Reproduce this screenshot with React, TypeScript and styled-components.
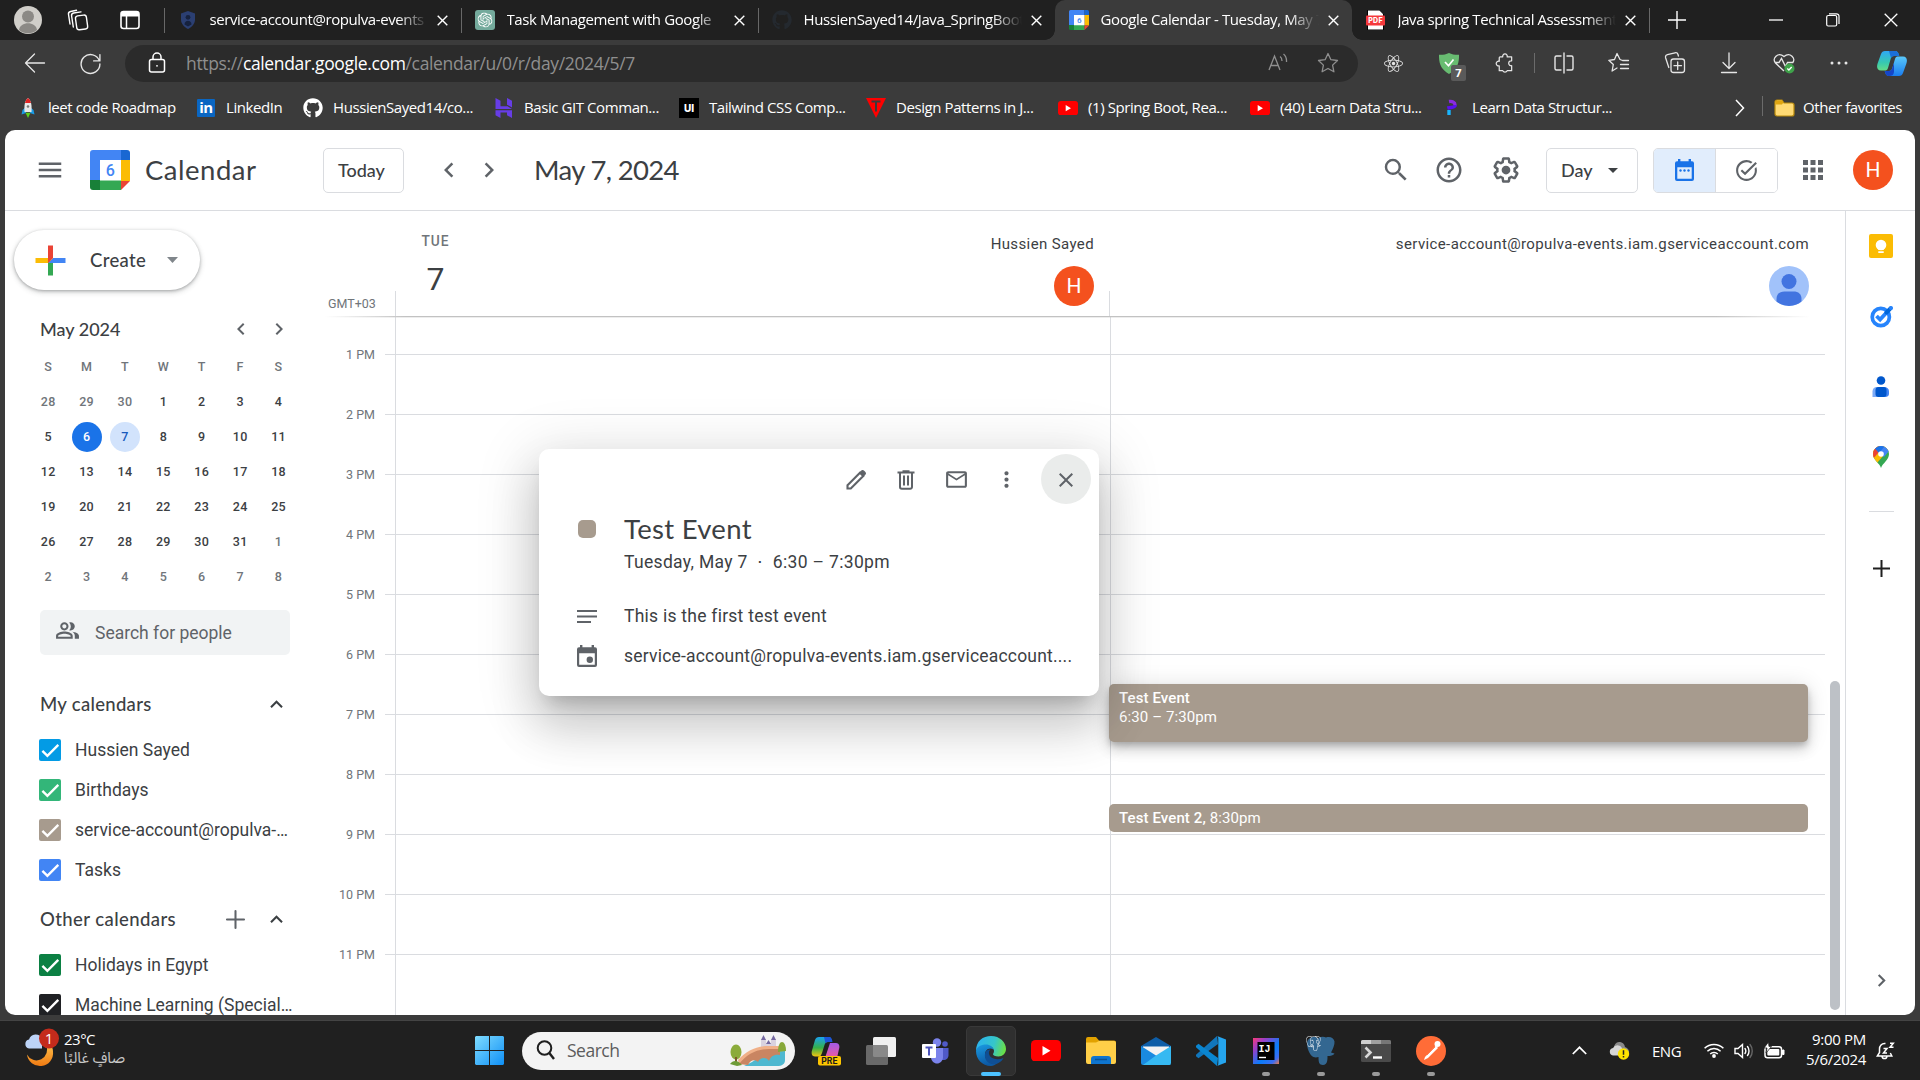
import React from 'react';
import styled, { createGlobalStyle, css } from 'styled-components';
import { MdMenu, MdSearch, MdHelpOutline, MdChevronLeft, MdChevronRight, MdApps, MdTaskAlt, MdOutlinePeopleAlt, MdExpandLess, MdClose, MdMoreVert, MdMailOutline } from 'react-icons/md';
import { FaReact, FaGithub } from 'react-icons/fa';
import { SiOpenai, SiPostgresql } from 'react-icons/si';

const SEGOE = '"Open Sans", "Noto Sans", "DejaVu Sans", sans-serif';
const ROBOTO = 'Roboto, "Liberation Sans", sans-serif';
const GOOGLE = 'Lato, Roboto, sans-serif';

const GlobalStyle = createGlobalStyle`
  *, *::before, *::after { box-sizing: border-box; }
  html, body { margin: 0; padding: 0; background: #202020; overflow: hidden; }
  svg { display: block; flex: none; }
`;

const Screen = styled.div`
  position: relative;
  width: 1920px;
  height: 1080px;
  display: flex;
  flex-direction: column;
  overflow: hidden;
  background: #3b3b3b;
  font-family: ${ROBOTO};
  white-space: nowrap;
`;

/* ---------- generic bits ---------- */
const Slot = styled.div<{ $w: number; $h?: number }>`
  width: ${p => p.$w}px;
  height: ${p => (p.$h ? p.$h + 'px' : '100%')};
  flex: none;
  display: flex;
  align-items: center;
  justify-content: center;
`;
const Label = styled.span<{ $w?: number; $ls?: number }>`
  display: block;
  flex: none;
  white-space: nowrap;
  text-align: left;
  ${p => p.$w !== undefined && css`width: ${p.$w}px;`}
  letter-spacing: ${p => p.$ls ?? 0}px;
`;

/* ---------- browser chrome ---------- */
const TitleBar = styled.div`
  height: 40px;
  flex: none;
  display: flex;
  background: #202020;
  color: #fff;
`;
const TitleLeft = styled.div`
  width: 164px;
  flex: none;
  display: flex;
  align-items: center;
  padding-left: 14px;
`;
const Tab = styled.div<{ $active?: boolean; $rule?: boolean }>`
  position: relative;
  width: 297px;
  flex: none;
  display: flex;
  align-items: center;
  padding-left: 13.5px;
  font: 400 15px ${SEGOE};
  color: #fff;
  ${p => p.$active && css`
    background: #3b3b3b;
    border-radius: 10px 10px 0 0;
    &::before, &::after {
      content: '';
      position: absolute;
      bottom: 0;
      width: 10px;
      height: 10px;
    }
    &::before { left: -10px; background: radial-gradient(circle at 0 0, #202020 9.5px, #3b3b3b 10px); }
    &::after { right: -10px; background: radial-gradient(circle at 100% 0, #202020 9.5px, #3b3b3b 10px); }
  `}
  ${p => p.$rule && css`
    background: linear-gradient(#686868, #686868) no-repeat 0 8px / 1px 25px;
  `}
`;
const TabText = styled.span`
  width: 218px;
  margin-left: 12px;
  padding-bottom: 2px;
  overflow: hidden;
  letter-spacing: -0.4px;
  mask-image: linear-gradient(90deg, #000 188px, transparent 218px);
`;
const TabClose = styled.span`
  margin-left: 9px;
  display: flex;
`;
const TabEnd = styled.div`
  flex: 1;
  display: flex;
  align-items: center;
  padding-left: 19px;
  background: linear-gradient(#686868, #686868) no-repeat 0 8px / 1px 25px;
`;

const ToolBar = styled.div`
  height: 46px;
  flex: none;
  display: flex;
  align-items: center;
  color: #e6e6e6;
`;
const Address = styled.div`
  width: 1233px;
  height: 37px;
  border-radius: 19px;
  background: #2b2b2b;
  display: flex;
  align-items: center;
  padding-left: 22px;
  font: 400 17.5px ${SEGOE};
  color: #8f8f8f;
  b { font-weight: 400; color: #fff; }
`;
const Grow = styled.div`flex: 1;`;
const Rule = styled.div<{ $h: number; $m?: string }>`
  width: 1px;
  height: ${p => p.$h}px;
  flex: none;
  background: #6b6b6b;
  margin: ${p => p.$m ?? 0};
`;
const ShieldWrap = styled.div`
  position: relative;
  width: 55px;
  display: flex;
  justify-content: center;
`;
const ShieldCount = styled.span`
  position: absolute;
  left: 30px;
  top: 12px;
  width: 15px;
  height: 16px;
  border-radius: 2px;
  background: #5a5a5a;
  color: #fff;
  font: 700 11px/16px ${SEGOE};
  text-align: center;
`;

const Bookmarks = styled.div`
  height: 44px;
  flex: none;
  display: flex;
  align-items: center;
  padding-left: 18px;
  color: #fff;
  font: 400 15px ${SEGOE};
`;
const Bookmark = styled.div<{ $w: number }>`
  width: ${p => p.$w}px;
  flex: none;
  display: flex;
  align-items: center;
  gap: 10px;
`;
const BookmarkText = styled(Label)`
  padding-bottom: 2px;
  letter-spacing: -0.42px;
`;
const UiTile = styled.span`
  width: 20px;
  height: 20px;
  background: #000;
  color: #fff;
  font: 800 10px/20px Inter, sans-serif;
  text-align: center;
`;
const InTile = styled.span`
  width: 18px;
  height: 18px;
  margin: 0 1px;
  border-radius: 1px;
  background: #0a66c2;
  color: #fff;
  font: 700 15px/17px ${SEGOE};
  letter-spacing: -0.5px;
  text-align: center;
`;

/* ---------- calendar page ---------- */
const Page = styled.div`
  position: relative;
  width: 1910px;
  height: 885px;
  margin-left: 5px;
  flex: none;
  border-radius: 10px;
  overflow: hidden;
  background: #fff;
  display: flex;
  flex-direction: column;
  color: #3c4043;
`;
const Header = styled.header`
  height: 81px;
  flex: none;
  display: flex;
  align-items: center;
  border-bottom: 1px solid #dadce0;
  color: #5f6368;
  font-family: ${GOOGLE};
`;
const Heading = styled.div<{ $w: number; $ls: number }>`
  width: ${p => p.$w}px;
  flex: none;
  font-size: 27.5px;
  line-height: 36px;
  letter-spacing: ${p => p.$ls}px;
  color: #3c4043;
`;
const OutlineButton = styled.button<{ $w: number }>`
  width: ${p => p.$w}px;
  height: 45px;
  flex: none;
  padding: 0 0 0 14px;
  border: 1px solid #dadce0;
  border-radius: 5px;
  background: #fff;
  display: flex;
  align-items: center;
  gap: 8px;
  color: #3c4043;
  font: 500 18px ${GOOGLE};
`;
const Toggle = styled.div`
  width: 125px;
  height: 45px;
  flex: none;
  display: flex;
  border: 1px solid #dadce0;
  border-radius: 5px;
  overflow: hidden;
`;
const ToggleHalf = styled.div<{ $on?: boolean }>`
  flex: 1;
  display: flex;
  align-items: center;
  justify-content: center;
  color: ${p => (p.$on ? '#1a73e8' : '#5f6368')};
  background: ${p => (p.$on ? '#e1edfc' : '#fff')};
  border-right: ${p => (p.$on ? '1px solid #dadce0' : '0')};
`;
const Avatar = styled.div<{ $s: number; $f: number }>`
  width: ${p => p.$s}px;
  height: ${p => p.$s}px;
  flex: none;
  border-radius: 50%;
  background: #f4511e;
  color: #fff;
  font: 400 ${p => p.$f}px/${p => p.$s + 1}px ${ROBOTO};
  letter-spacing: 0;
  text-align: center;
`;
const Body = styled.div`
  flex: 1;
  min-height: 0;
  display: flex;
`;

/* sidebar */
const Sidebar = styled.aside`
  width: 320px;
  flex: none;
  overflow: hidden;
  padding: 19px 0 0 35px;
`;
const Create = styled.button`
  width: 186px;
  height: 60px;
  margin-left: -26px;
  padding: 0 0 0 14px;
  border: 0;
  border-radius: 30px;
  background: #fff;
  box-shadow: 0 1px 3px rgba(60, 64, 67, .35), 0 2px 5px 1px rgba(60, 64, 67, .18);
  display: flex;
  align-items: center;
  color: #3c4043;
  font: 500 18.5px ${GOOGLE};
`;
const MonthHead = styled.div`
  margin-top: 19px;
  height: 40px;
  display: flex;
  align-items: center;
  font: 500 18px ${GOOGLE};
`;
const MonthGrid = styled.div`
  display: grid;
  grid-template-columns: repeat(7, 38.4px);
  grid-template-rows: 34px repeat(6, 35px);
  margin: 1px 0 0 -11px;
  width: 269px;
`;
const DayCell = styled.div<{ $kind: string }>`
  display: flex;
  align-items: center;
  justify-content: center;
  font: 500 12.5px ${ROBOTO};
  letter-spacing: 0.3px;
  color: ${p => (p.$kind === 'today' ? '#fff' : p.$kind === 'sel' ? '#185abc' : p.$kind === 'dim' ? '#70757a' : '#3c4043')};
  span {
    width: 30px;
    height: 30px;
    line-height: 30px;
    text-align: center;
    border-radius: 50%;
    background: ${p => (p.$kind === 'today' ? '#1a73e8' : p.$kind === 'sel' ? '#d2e3fc' : 'transparent')};
  }
`;
const PeopleSearch = styled.div`
  width: 250px;
  height: 45px;
  margin-top: 16px;
  border-radius: 5px;
  background: #f1f3f4;
  display: flex;
  align-items: center;
  padding-left: 15px;
  gap: 15px;
  color: #5f6368;
  font: 400 17.5px ${ROBOTO};
  svg { margin-bottom: 4px; }
`;
const ListHead = styled.div<{ $top: number }>`
  margin-top: ${p => p.$top}px;
  height: 40px;
  display: flex;
  align-items: center;
  font: 500 18.5px ${GOOGLE};
  color: #3c4043;
`;
const CalRow = styled.div`
  height: 40px;
  display: flex;
  align-items: center;
  gap: 14px;
  margin-left: -1px;
  font: 400 17.5px ${ROBOTO};
`;
const CheckBox = styled.span<{ $c: string }>`
  width: 22px;
  height: 22px;
  flex: none;
  border-radius: 2px;
  background: ${p => p.$c};
`;
const CalName = styled.span`
  width: 218px;
  overflow: hidden;
  text-overflow: ellipsis;
`;

/* main */
const Main = styled.main`
  position: relative;
  width: 1520px;
  flex: none;
  display: flex;
  flex-direction: column;
`;
const DayHead = styled.div`
  height: 105px;
  flex: none;
  display: flex;
`;
const GutterHead = styled.div`
  width: 70px;
  display: flex;
  align-items: flex-end;
  padding: 0 0 5px 3px;
  font: 400 12.5px ${ROBOTO};
  color: #70757a;
`;
const ColHead = styled.div<{ $w: number }>`
  width: ${p => p.$w}px;
  display: flex;
  justify-content: space-between;
  padding-right: 15px;
  background: linear-gradient(#dadce0, #dadce0) no-repeat 0 100% / 1px 25px;
`;
const Weekday = styled.div`
  width: 81px;
  padding-top: 21px;
  text-align: center;
  font: 500 13.75px/18px ${ROBOTO};
  letter-spacing: 1px;
  color: #70757a;
  strong {
    display: block;
    margin-top: 8px;
    font: 400 32px/42px ${ROBOTO};
    letter-spacing: 0;
    color: #3c4043;
  }
`;
const Owner = styled.div`
  margin-left: auto;
  padding-top: 23px;
  display: flex;
  flex-direction: column;
  align-items: flex-end;
  gap: 12px;
  font: 400 15px/20px ${ROBOTO};
  letter-spacing: 0.38px;
  color: #3c4043;
`;
const HeadShadow = styled.div`
  width: 1500px;
  height: 2px;
  flex: none;
  background: linear-gradient(90deg, #fff, #c2c2c2 80px, #c2c2c2 1390px, #fff 1485px);
  mask-image: linear-gradient(#000 50%, rgba(0, 0, 0, .3) 50%);
  margin-bottom: -1px;
`;
const Scroller = styled.div`
  flex: 1;
  min-height: 0;
  overflow: hidden;
  display: flex;
`;
const HourLabels = styled.div`
  width: 50px;
  flex: none;
  padding-top: 8px;
  margin-right: 10px;
  text-align: right;
  font: 400 12.5px/60px ${ROBOTO};
  color: #70757a;
`;
const Hours = styled.div`width: 1440px; flex: none;`;
const HourRow = styled.div<{ $h: number }>`
  height: ${p => p.$h}px;
  display: grid;
  grid-template-columns: 10px 715px 715px;
  border-bottom: 1px solid #dadce0;
  i { border-left: 1px solid #dadce0; }
`;
const ScrollTrack = styled.div`
  width: 20px;
  display: flex;
  justify-content: center;
  align-items: flex-end;
  padding-bottom: 5px;
`;
const ScrollThumb = styled.div`
  width: 10px;
  height: 329px;
  border-radius: 5px;
  background: #bdc1c6;
`;
const EventBlock = styled.div<{ $top: number; $h: number; $raised?: boolean }>`
  position: absolute;
  left: 784px;
  top: ${p => p.$top}px;
  width: 699px;
  height: ${p => p.$h}px;
  border-radius: 5px;
  padding: 5px 10px;
  background: #a79b8e;
  color: #fff;
  font: 400 15px/19px ${ROBOTO};
  letter-spacing: 0.1px;
  b { font-weight: 500; }
  ${p => p.$raised && css`box-shadow: 0 8px 13px rgba(0,0,0,.14), 0 1px 22px rgba(0,0,0,.12), 0 4px 6px -1px rgba(0,0,0,.2);`}
`;

/* right rail */
const Rail = styled.aside`
  flex: 1;
  border-left: 1px solid #dadce0;
  display: flex;
  flex-direction: column;
  align-items: center;
  padding-left: 1px;
`;
const RailLine = styled.div`
  width: 25px;
  height: 1px;
  background: #dadce0;
`;

/* event popup */
const Popup = styled.div`
  position: absolute;
  left: 534px;
  top: 319px;
  width: 560px;
  height: 247px;
  border-radius: 10px;
  background: #fff;
  color: #5f6368;
  box-shadow: 0 30px 47px 4px rgba(0,0,0,.14), 0 11px 57px 10px rgba(0,0,0,.12), 0 14px 19px -9px rgba(0,0,0,.2);
`;
const PopupBar = styled.div`
  height: 60px;
  padding: 1px 8px 0 0;
  display: flex;
  align-items: center;
  justify-content: flex-end;
`;
const CloseCircle = styled.div`
  width: 50px;
  height: 50px;
  margin: 0 0 2px 10px;
  padding-top: 2px;
  border-radius: 50%;
  background: #eaeceb;
  display: flex;
  align-items: center;
  justify-content: center;
`;
const PopupRow = styled.div<{ $h: number }>`
  height: ${p => p.$h}px;
  display: flex;
  align-items: center;
  font: 400 17.5px ${ROBOTO};
  color: #3c4043;
`;
const PopupIcon = styled.div`
  width: 95px;
  margin-right: -10px;
  flex: none;
  display: flex;
  justify-content: center;
  color: #5f6368;
`;
const Swatch = styled.span`
  width: 18px;
  height: 18px;
  border-radius: 5px;
  background: #a79b8e;
`;
const PopupTitle = styled.span`
  padding-bottom: 2px;
  font: 400 27.5px ${GOOGLE};
  letter-spacing: 0.3px;
`;

/* taskbar */
const TaskBar = styled.div`
  height: 60px;
  margin-top: 5px;
  flex: none;
  display: flex;
  align-items: center;
  background: #202020;
  border-top: 1px solid #444;
  color: #fff;
  font: 400 15px ${SEGOE};
`;
const Weather = styled.div`
  width: 462px;
  flex: none;
  display: flex;
  align-items: center;
  padding-left: 22px;
  gap: 4px;
`;
const WeatherText = styled.div`
  display: flex;
  flex-direction: column;
  padding-bottom: 3px;
  line-height: 20px;
`;
const Muted = styled.div`
  color: #c8c8c8;
  font: 400 14.8px/20px "Noto Sans Arabic", "DejaVu Sans", sans-serif;
`;
const SearchPill = styled.div`
  width: 273px;
  height: 38px;
  margin: 0 3px 0 5px;
  flex: none;
  border-radius: 19px;
  background: #f3f3f3;
  display: flex;
  align-items: center;
  justify-content: space-between;
  padding: 0 7px 0 14px;
  color: #5c5c5c;
  font-size: 17.5px;
`;
const SearchLeft = styled.div`
  display: flex;
  align-items: center;
  gap: 12px;
  padding-bottom: 1px;
`;
const TaskButton = styled.div<{ $active?: boolean; $running?: boolean }>`
  width: 50px;
  height: 50px;
  margin: 0 2.5px;
  flex: none;
  position: relative;
  display: flex;
  align-items: center;
  justify-content: center;
  border-radius: 5px;
  ${p => p.$active && css`background: #2f2f2f; border: 1px solid #393939;`}
  ${p => (p.$active || p.$running) && css`
    &::after {
      content: '';
      position: absolute;
      bottom: ${p.$active ? -1 : 0}px;
      left: 50%;
      transform: translateX(-50%);
      width: ${p.$active ? 20 : 8}px;
      height: 4px;
      border-radius: 2px;
      background: ${p.$active ? '#4cc2ff' : '#9a9a9a'};
    }
  `}
`;
const Tray = styled.div`
  flex: 1;
  display: flex;
  align-items: center;
  justify-content: flex-end;
  padding-right: 20px;
`;
const Clock = styled.div`
  width: 70px;
  padding-bottom: 3px;
  text-align: right;
  line-height: 20px;
  letter-spacing: -0.3px;
`;

/* ---------- drawings ---------- */
const X = ({ s = 11, w = 1.4, c = '#fff' }: { s?: number; w?: number; c?: string }) => (
  <svg width={s} height={s} viewBox={`0 0 ${s} ${s}`} stroke={c} strokeWidth={w} fill="none"><path d={`M.7.7 ${s - 0.7} ${s - 0.7}M${s - 0.7} .7 .7 ${s - 0.7}`} /></svg>
);
const CalLogo = ({ s }: { s: number }) => (
  <svg width={s} height={s} viewBox="0 0 40 40">
    <path d="M3 0h28v10H10v20H0V3a3 3 0 0 1 3-3z" fill="#4285f4" />
    <path d="M31 0h6a3 3 0 0 1 3 3v7h-9z" fill="#1967d2" />
    <path d="M31 10h9v21h-9z" fill="#fbbc04" />
    <path d="M0 30h10v10H3a3 3 0 0 1-3-3z" fill="#188038" />
    <path d="M10 30h21v10H10z" fill="#34a853" />
    <path d="M31 31h9l-9 9z" fill="#ea4335" />
    <path d="M10 10h21v20.500H10z" fill="#fff" />
    <text x="20.4" y="26" textAnchor="middle" fontFamily={ROBOTO} fontSize="16" fontWeight="500" fill="#4285f4">6</text>
  </svg>
);
const Stroke = ({ s = 22, d, w = 1.3, c = 'currentColor', children }: { s?: number; d?: string; w?: number; c?: string; children?: React.ReactNode }) => (
  <svg width={s} height={s} viewBox="0 0 22 22" fill="none" stroke={c} strokeWidth={w} strokeLinecap="round" strokeLinejoin="round">{d && <path d={d} />}{children}</svg>
);
const YouTube = ({ w = 20 }: { w?: number }) => (
  <svg width={w} height={w * 0.72} viewBox="0 0 30 21.5"><rect width="30" height="21.5" rx="4.5" fill="#f00" /><path d="M11.5 6l8 4.75-8 4.75z" fill="#fff" /></svg>
);
const Folder = () => (
  <svg width="21" height="18" viewBox="0 0 21 18"><path d="M1 3a2 2 0 0 1 2-2h5l2 3h8a2 2 0 0 1 2 2v9a2 2 0 0 1-2 2H3a2 2 0 0 1-2-2z" fill="#ffda74" stroke="#b98a0b" strokeWidth="1.2" /><path d="M1.4 3a1.6 1.6 0 0 1 1.6-1.6h4.8l1.6 2.2L8 5.5H1.4z" fill="#e0a510" /></svg>
);
const Gear = () => (
  <svg width="30" height="30" viewBox="0 0 24 24" fill="#5f6368"><path d="M13.85 22.25h-3.7c-.74 0-1.36-.54-1.45-1.27l-.27-1.89c-.27-.14-.53-.29-.79-.46l-1.8.72c-.7.26-1.47-.03-1.81-.65L2.2 15.53c-.35-.66-.2-1.44.36-1.88l1.53-1.19c-.01-.15-.02-.3-.02-.46 0-.15.01-.31.02-.46l-1.52-1.19c-.59-.45-.74-1.26-.37-1.88l1.85-3.19c.34-.62 1.11-.9 1.79-.63l1.81.73c.26-.17.52-.32.78-.46l.27-1.91c.09-.7.71-1.25 1.44-1.25h3.7c.74 0 1.36.54 1.45 1.27l.27 1.89c.27.14.53.29.79.46l1.8-.72c.71-.26 1.48.03 1.82.65l1.84 3.18c.36.66.2 1.44-.36 1.88l-1.52 1.19c.01.15.02.3.02.46s-.01.31-.02.46l1.52 1.19c.56.45.72 1.23.37 1.86l-1.86 3.22c-.34.62-1.11.9-1.8.63l-1.8-.72c-.26.17-.52.32-.78.46l-.27 1.91c-.1.68-.72 1.22-1.46 1.22zm-3.23-2h2.76l.37-2.55.53-.22c.44-.18.88-.44 1.34-.78l.45-.34 2.38.96 1.38-2.4-2.03-1.58.07-.56c.03-.26.06-.51.06-.78s-.03-.53-.06-.78l-.07-.56 2.03-1.58-1.39-2.4-2.39.96-.45-.35c-.42-.32-.87-.58-1.33-.77l-.52-.22-.37-2.55h-2.76l-.37 2.55-.53.21c-.44.19-.88.44-1.34.79l-.45.33-2.38-.95-1.39 2.39 2.03 1.58-.07.56a7 7 0 0 0-.06.79c0 .26.02.53.06.78l.07.56-2.03 1.58 1.38 2.4 2.39-.96.45.35c.43.33.86.58 1.33.77l.53.22.38 2.55z" /><circle cx="12" cy="12" r="3.5" /></svg>
);
const Tick = () => (
  <svg width="22" height="22" viewBox="0 0 22 22" fill="none" stroke="#fff" strokeWidth="2.4"><path d="M3.4 11.8l5 5L19.3 5.9" /></svg>
);
const Copilot = () => (
  <svg width="30" height="27" viewBox="0 0 30 27">
    <defs>
      <linearGradient id="cpA" x1="0" y1="0" x2="0" y2="1"><stop offset="0" stopColor="#2fa8f5" /><stop offset=".6" stopColor="#37c9b0" /><stop offset="1" stopColor="#64dd87" /></linearGradient>
      <linearGradient id="cpB" x1="0" y1="0" x2="0" y2="1"><stop offset="0" stopColor="#5ac8fa" /><stop offset="1" stopColor="#1a7df0" /></linearGradient>
    </defs>
    <path d="M8 1h10c3 0 3.500 2.500 4.300 5H17c-2 0-3 1.500-3.500 3.500L11 18c-.6 2-1.500 2.500-3.500 2.500H4C0 20.500-.5 17 .6 13.500L4 4c.7-2 2-3 4-3z" fill="url(#cpA)" />
    <path d="M22 26H12c-3 0-3.500-2.500-4.300-5H12c2 0 3-1.500 3.500-3.500L18 9c.6-2 1.500-2.500 3.500-2.500H26c4 0 4.500 3.500 3.400 7L26 23c-.7 2-2 3-4 3z" fill="url(#cpB)" />
    <path d="M7.700 21H12c2 0 3-1.500 3.500-3.500L17 13v9c-.5 3-2 4-5 4-3 0-3.500-2.500-4.300-5z" fill="#1546c8" />
    <path d="M12 1h6c3 0 3.500 2.500 4.300 5H17c-1.500 0-2.500.8-3 2z" fill="#1b6fd8" />
  </svg>
);

const tabs = [
  { t: 'service-account@ropulva-events', icon: <svg width="20" height="20" viewBox="0 0 20 20"><path d="M10 1l7 2.600v6c0 4-3 7.600-7 9.400-4-1.800-7-5.400-7-9.400v-6z" fill="#2b3f72" /><circle cx="10" cy="7.300" r="2.400" fill="#16223f" /><path d="M6.500 14.500c0-5 7-5 7 0L10 16.500z" fill="#16223f" /></svg> },
  { t: 'Task Management with Google', icon: <svg width="20" height="20" viewBox="0 0 20 20"><rect width="20" height="20" rx="3" fill="#74aa9c" /><SiOpenai x="2.500" y="2.500" width="15" height="15" color="#fff" /></svg>, rule: true },
  { t: 'HussienSayed14/Java_SpringBoot', icon: <FaGithub size={20} color="#24292f" />, rule: true },
  { t: 'Google Calendar - Tuesday, May 7,', icon: <CalLogo s={20} />, active: true },
  { t: 'Java spring Technical Assessment', icon: <svg width="20" height="20" viewBox="0 0 20 20"><path d="M1.500 0h12l4 4v16h-16z" fill="#fff" stroke="#000" /><rect x="0" y="5.500" width="19" height="10" rx="1" fill="#f6393c" /><text x="9.500" y="13.200" textAnchor="middle" fontFamily="Inter, sans-serif" fontWeight="800" fontSize="7" fill="#fff" letterSpacing=".3">PDF</text></svg> },
];

const bookmarks: { t: string; w: number; icon: React.ReactNode }[] = [
  { t: 'leet code Roadmap', w: 178, icon: <svg width="20" height="22" viewBox="0 0 20 22"><path d="M4.500 13l3.500-3v6l-4.500 1.500zM15.500 13L12 10v6l4.500 1.500z" fill="#1a9be6" /><path d="M10 1c3 2.500 4 6 3.500 14h-7C6 7 7 3.500 10 1z" fill="#e8e8e8" /><path d="M10 1c1.500 1.200 2.500 2.800 3 5H7c.5-2.200 1.500-3.800 3-5z" fill="#e02424" /><circle cx="10" cy="9.500" r="1.300" fill="#777" /><path d="M7.500 15.800h5L10 21z" fill="#5bd11d" /></svg> },
  { t: 'LinkedIn', w: 107, icon: <InTile>in</InTile> },
  { t: 'HussienSayed14/co...', w: 191, icon: <FaGithub size={20} /> },
  { t: 'Basic GIT Comman...', w: 185, icon: <svg width="20" height="20" viewBox="0 0 20 20" fill="#673de6"><path d="M1.500 0l5 2.700v5.600h7L18 11H1.500zM13 0l5 2.700v6.700l-5-2.700zM1.500 12.200h16.500V20l-5-2.700v-2.900h-6.500V20l-5-2.700z" /></svg> },
  { t: 'Tailwind CSS Comp...', w: 187, icon: <UiTile>UI</UiTile> },
  { t: 'Design Patterns in J...', w: 192, icon: <svg width="20" height="20" viewBox="0 0 20 20"><path d="M0 0h20L10 20z" fill="#f00" /><path d="M5.500 3.500h9M10 3.500v10" stroke="#3b3b3b" strokeWidth="2" fill="none" /></svg> },
  { t: '(1) Spring Boot, Rea...', w: 192, icon: <YouTube /> },
  { t: '(40) Learn Data Stru...', w: 192, icon: <YouTube /> },
  { t: 'Learn Data Structur...', w: 200, icon: <svg width="20" height="20" viewBox="0 0 20 20" fill="none" strokeWidth="3.400"><path d="M7 3.500c3-.5 6 .5 6 3.500" stroke="#8a2be2" /><path d="M13.300 7c0 3-6 2.500-8 3" stroke="#5b10f0" /><path d="M7 12v5" stroke="#19b5fe" /></svg> },
];

const hours = ['1 PM', '2 PM', '3 PM', '4 PM', '5 PM', '6 PM', '7 PM', '8 PM', '9 PM', '10 PM', '11 PM'];
const days = [28, 29, 30, ...Array.from({ length: 31 }, (_, i) => i + 1), 1, 2, 3, 4, 5, 6, 7, 8];
const kindOf = (i: number) => (i < 3 || i > 33 ? 'dim' : i === 8 ? 'today' : i === 9 ? 'sel' : 'day');

const mine: [string, string][] = [['Hussien Sayed', '#039be5'], ['Birthdays', '#33b679'], ['service-account@ropulva-events', '#a79b8e'], ['Tasks', '#4285f4']];
const others: [string, string][] = [['Holidays in Egypt', '#0b8043'], ['Machine Learning (Specialization)', '#202124']];

const CalendarRow = ({ name, color }: { name: string; color: string }) => (
  <CalRow><CheckBox $c={color}><Tick /></CheckBox><CalName>{name}</CalName></CalRow>
);

function Chrome() {
  return (
    <>
      <TitleBar>
        <TitleLeft>
          <svg width="28" height="28" viewBox="0 0 28 28"><circle cx="14" cy="14" r="14" fill="#d0cec9" /><circle cx="14" cy="10.500" r="6" fill="#8b8985" /><path d="M5 24c1-9 17-9 18 0a14 14 0 0 1-18 0z" fill="#8b8985" /></svg>
          <Slot $w={71}>
            <Stroke w={1.4}><rect x="9" y="6.500" width="11" height="14" rx="2.500" transform="rotate(-8 14 13)" /><path d="M6.300 18L4.600 7a2.600 2.600 0 0 1 2.100-3L14 2.900M3 15L1.500 5.500A2.600 2.600 0 0 1 3.600 2.500L9.500 1.300" /></Stroke>
          </Slot>
          <Slot $w={34}>
            <svg width="20" height="20" viewBox="0 0 20 20"><rect x="1" y="1.500" width="18" height="17" rx="2.500" fill="none" stroke="#fff" strokeWidth="1.600" /><path d="M1 6.500V4a2.500 2.500 0 0 1 2.500-2.500h13A2.500 2.500 0 0 1 19 4v2.500z" fill="#fff" /><path d="M6.500 6v12" stroke="#fff" strokeWidth="1.500" /></svg>
          </Slot>
        </TitleLeft>
        {tabs.map((tab, i) => (
          <Tab key={tab.t} $active={tab.active} $rule={i === 0 || tab.rule}>
            {tab.icon}<TabText>{tab.t}</TabText><TabClose><X /></TabClose>
          </Tab>
        ))}
        <TabEnd>
          <svg width="18" height="18" viewBox="0 0 18 18" stroke="#fff" strokeWidth="1.400"><path d="M9 0v18M0 9h18" /></svg>
          <Slot $w={70} />
          <Slot $w={40}><svg width="14" height="2"><path d="M0 1h14" stroke="#fff" strokeWidth="1.300" /></svg></Slot>
          <Slot $w={74}><svg width="14" height="14" viewBox="0 0 14 14" fill="none" stroke="#fff" strokeWidth="1.200"><rect x=".7" y="2.500" width="10" height="10.500" rx="1.500" /><path d="M3 .8h7.500a2.500 2.500 0 0 1 2.500 2.500V11" /></svg></Slot>
          <Slot $w={42}><X s={14} w={1.3} /></Slot>
        </TabEnd>
      </TitleBar>
      <ToolBar>
        <Slot $w={70}><Stroke d="M20.500 11H1.500M10.500 2L1.500 11l9 9" /></Slot>
        <Slot $w={40}><Stroke s={23} d="M19.500 8.500A9 9 0 1 0 20 11.500M20 2.500v6h-6" /></Slot>
        <Slot $w={15} />
        <Address>
          <svg width="20" height="22" viewBox="0 0 20 22" fill="none" stroke="#fff" strokeWidth="1.500"><rect x="2.500" y="7.500" width="15" height="12.500" rx="2" /><path d="M6 7.500V5a4 4 0 0 1 8 0v2.500" /><circle cx="10" cy="13.800" r=".9" fill="#fff" stroke="none" /></svg>
          <Slot $w={19} />
          <Label $ls={-0.35}>https://<b>calendar.google.com</b>/calendar/u/0/r/day/2024/5/7</Label>
          <Grow />
          <svg width="22" height="20" viewBox="0 0 22 20" fill="none" stroke="#8f8f8f" strokeWidth="1.300"><path d="M1 17L6.500 3 12 17M3 12.500h7M12 3.500c1.500 1 2 2.500 2 4.500M15.500 1c2.500 2 3.200 4.500 3 8" /></svg>
          <Slot $w={27} />
          <Stroke c="#8f8f8f" d="M11 1.500l2.900 6.200 6.600.8-4.900 4.600 1.300 6.700L11 16.500l-5.900 3.300 1.300-6.700L1.500 8.500l6.600-.8z" />
          <Slot $w={19} />
        </Address>
        <Slot $w={8} />
        <Slot $w={55}><FaReact size={19} /></Slot>
        <ShieldWrap>
          <svg width="20" height="21" viewBox="0 0 20 21"><path d="M10 0c3 1.500 6.500 2 10 1.800C20.300 11 17.500 17 10 21 2.500 17-.3 11 0 1.800 3.500 2 7 1.500 10 0z" fill="#68bc71" /><path d="M6 9l3.500 3.800L14.500 6.500" fill="none" stroke="#fff" strokeWidth="1.700" /></svg>
          <ShieldCount>7</ShieldCount>
        </ShieldWrap>
        <Slot $w={56}><Stroke s={21} d="M6.500 4h2.700a2.400 2.400 0 1 1 4.600 0H18.500v4.200a2.600 2.600 0 1 0 0 5.100V18.500h-4.700a2.500 2.500 0 0 1-4.600 0H5.500v-5a2.500 2.500 0 1 1 0-4.800V5a1 1 0 0 1 1-1z" /></Slot>
        <Rule $h={20} $m="0 1px 0 2px" />
        <Slot $w={55}><Stroke w={1.4} d="M11 1v20M8 4H3.500A1.500 1.500 0 0 0 2 5.500v11A1.500 1.500 0 0 0 3.500 18H8M14 4h4.500A1.500 1.500 0 0 1 20 5.500v11a1.500 1.500 0 0 1-1.500 1.500H14" /></Slot>
        <Slot $w={56}><Stroke d="M20.500 8.500h-6L12 7.500 9 1.500 6.500 7.500.8 8.300l4.500 4.200-1.200 6.500L9 16M12.500 12.500h8M12.500 16.500h8" /></Slot>
        <Slot $w={55}><Stroke><rect x="7" y="7" width="13.500" height="13.500" rx="2.500" /><path d="M13.700 10v7.500M10 13.700h7.500M4.800 15.500L1.600 5.700a2.500 2.500 0 0 1 1.800-3l7.600-1.900a2.500 2.500 0 0 1 3 1.700l.4 1.500" /></Stroke></Slot>
        <Slot $w={54}><Stroke d="M11 1v15M5 10.500l6 6 6-6M3.500 20.500h15" /></Slot>
        <Slot $w={55}>
          <svg width="24" height="24" viewBox="0 0 24 24" fill="none" stroke="#e6e6e6" strokeWidth="1.400"><path d="M12 20L3.500 12C-.5 7.500 6 .5 12 5.500 18 .5 24.500 7.500 20.500 12M3 11.500h4l2.500-4 4 8 2-4H21" /><circle cx="17.500" cy="17.500" r="5" fill="#3fa24a" stroke="none" /><path d="M15.300 17.600l1.600 1.500 2.800-3" stroke="#fff" /></svg>
        </Slot>
        <Slot $w={55}><svg width="18" height="4" fill="#e6e6e6"><circle cx="2" cy="2" r="1.500" /><circle cx="9" cy="2" r="1.500" /><circle cx="16" cy="2" r="1.500" /></svg></Slot>
        <Slot $w={51}><Copilot /></Slot>
      </ToolBar>
      <Bookmarks>
        {bookmarks.map(b => <Bookmark key={b.t} $w={b.w}>{b.icon}<BookmarkText $ls={-0.42}>{b.t}</BookmarkText></Bookmark>)}
        <Grow />
        <svg width="10" height="18" viewBox="0 0 10 18" fill="none" stroke="#fff" strokeWidth="1.500"><path d="M1 1l7.500 8L1 17" /></svg>
        <Rule $h={20} $m="-4px 11px 0 17px" />
        <Folder />
        <Slot $w={8} />
        <BookmarkText $w={117}>Other favorites</BookmarkText>
      </Bookmarks>
    </>
  );
}

const HeaderBar = () => (
  <Header>
    <Slot $w={30} /><Slot $w={30}><MdMenu size={30} /></Slot><Slot $w={25} />
    <CalLogo s={40} />
    <Slot $w={15} />
    <Heading $w={178} $ls={0.5}>Calendar</Heading>
    <OutlineButton $w={81}>Today</OutlineButton>
    <Slot $w={25} /><Slot $w={40}><MdChevronLeft size={30} /></Slot><Slot $w={40}><MdChevronRight size={30} /></Slot>
    <Slot $w={25} />
    <Heading $w={201} $ls={-0.65}>May 7, 2024</Heading>
    <Grow />
    <Slot $w={52}><MdSearch size={30} /></Slot>
    <Slot $w={53}><MdHelpOutline size={30} /></Slot>
    <Slot $w={62}><Gear /></Slot>
    <Slot $w={9} />
    <OutlineButton $w={92}><Label $w={39}>Day</Label><svg width="10" height="5"><path d="M0 0h10L5 5z" fill="#3c4043" /></svg></OutlineButton>
    <Slot $w={15} />
    <Toggle>
      <ToggleHalf $on><svg width="19" height="22" viewBox="0 0 19 22" fill="#1a73e8"><path fillRule="evenodd" d="M3 0h2.400v2.300h8.200V0H16v2.300h1a2 2 0 0 1 2 2V20a2 2 0 0 1-2 2H2a2 2 0 0 1-2-2V4.300a2 2 0 0 1 2-2h1zM2.300 8.200v11.500h14.400V8.200z" /><circle cx="5.500" cy="11.500" r="1.200" /><circle cx="9.500" cy="11.500" r="1.200" /><circle cx="13.500" cy="11.500" r="1.200" /></svg></ToggleHalf>
      <ToggleHalf><MdTaskAlt size={25} /></ToggleHalf>
    </Toggle>
    <Slot $w={69}><MdApps size={30} /></Slot>
    <Slot $w={6} />
    <Avatar $s={40} $f={21}>H</Avatar>
    <Slot $w={22} />
  </Header>
);

const SideBar = () => (
  <Sidebar>
    <Create>
      <svg width="45" height="45" viewBox="0 0 36 36"><path fill="#34A853" d="M16 16v14h4V20z" /><path fill="#4285F4" d="M30 16H20l-4 4h14z" /><path fill="#FBBC05" d="M6 16v4h10l4-4z" /><path fill="#EA4335" d="M20 16V6h-4v14z" /></svg>
      <Slot $w={17} /><Label $w={77} $ls={0.35}>Create</Label>
      <svg width="11" height="6"><path d="M0 0h11L5.500 6z" fill="#80868b" /></svg>
    </Create>
    <MonthHead><Label $w={182}>May 2024</Label><Slot $w={38}><MdChevronLeft size={24} color="#5f6368" /></Slot><Slot $w={38}><MdChevronRight size={24} color="#5f6368" /></Slot></MonthHead>
    <MonthGrid>
      {['S', 'M', 'T', 'W', 'T', 'F', 'S'].map((d, i) => <DayCell key={'h' + i} $kind="dim"><span>{d}</span></DayCell>)}
      {days.map((d, i) => <DayCell key={i} $kind={kindOf(i)}><span>{d}</span></DayCell>)}
    </MonthGrid>
    <PeopleSearch><MdOutlinePeopleAlt size={25} />Search for people</PeopleSearch>
    <ListHead $top={29}><Label $w={224} $ls={0.3}>My calendars</Label><MdExpandLess size={25} /></ListHead>
    <Slot $w={1} $h={6} />
    {mine.map(([n, c]) => <CalendarRow key={n} name={n} color={c} />)}
    <ListHead $top={9}><Label $w={183} $ls={0.42}>Other calendars</Label><Stroke s={25} c="#5f6368" w={1.8} d="M11 3.500v15M3.500 11h15" /><Slot $w={16} /><MdExpandLess size={25} /></ListHead>
    <Slot $w={1} $h={6} />
    {others.map(([n, c]) => <CalendarRow key={n} name={n} color={c} />)}
  </Sidebar>
);

const DayView = () => (
  <Main>
    <DayHead>
      <GutterHead>GMT+03</GutterHead>
      <ColHead $w={714}>
        <Weekday>TUE<strong>7</strong></Weekday>
        <Owner>Hussien Sayed<Avatar $s={40} $f={21}>H</Avatar></Owner>
      </ColHead>
      <ColHead $w={715}>
        <Owner>service-account@ropulva-events.iam.gserviceaccount.com
          <svg width="40" height="40" viewBox="0 0 40 40"><circle cx="20" cy="20" r="20" fill="#a1c2fa" /><circle cx="20" cy="15.500" r="7.500" fill="#4274e0" /><path d="M7.500 35.500V33c0-5 3-7.500 8-7.500h9c5 0 8 2.500 8 7.500v2.500a20 20 0 0 1-25 0z" fill="#4274e0" /></svg>
        </Owner>
      </ColHead>
    </DayHead>
    <HeadShadow />
    <Scroller>
      <HourLabels>{hours.map(h => <div key={h}>{h}</div>)}</HourLabels>
      <Hours>{[38, ...Array(10).fill(60), 62].map((h, i) => <HourRow key={i} $h={h}><span /><i /><i /></HourRow>)}</Hours>
      <ScrollTrack><ScrollThumb /></ScrollTrack>
    </Scroller>
    <EventBlock $top={473} $h={58} $raised><b>Test Event</b><br />6:30 – 7:30pm</EventBlock>
    <EventBlock $top={593} $h={28}><b>Test Event 2,</b> 8:30pm</EventBlock>
  </Main>
);

const SideRail = () => (
  <Rail>
    <Slot $w={40} $h={70}><svg width="24" height="24" viewBox="0 0 24 24"><rect width="24" height="24" rx="2" fill="#fbbc04" /><circle cx="12" cy="11" r="5.300" fill="#fff" /><path d="M9.300 14h5.400v2H9.300zM9.300 17.200h5.400V19H9.300z" fill="#fff" /></svg></Slot>
    <Slot $w={40} $h={70}><svg width="23" height="23" viewBox="0 0 23 23"><circle cx="10.800" cy="12" r="8.600" fill="none" stroke="#2684fc" strokeWidth="3.700" /><path d="M6.500 11l3.600 3.600L18 6" fill="none" stroke="#2684fc" strokeWidth="3.800" /><path d="M16.500 7.500l4-4.200" stroke="#0066da" strokeWidth="4" strokeLinecap="round" /><circle cx="21" cy="3" r="2" fill="#2684fc" /></svg></Slot>
    <Slot $w={40} $h={71}><svg width="18" height="22" viewBox="0 0 18 22"><circle cx="9" cy="4.500" r="4.300" fill="#0057cc" /><path d="M5 11c-3 0-4.500 2-4.500 4.500V21H9V11z" fill="#7baaf7" /><path d="M12 11c3 0 5 1.500 5 4.500v2c0 2-1 3.500-4 3.500H9V11z" fill="#4285f4" /><rect x="3.500" y="11" width="11" height="10" rx="3" fill="#0057cc" /></svg></Slot>
    <Slot $w={40} $h={70}><svg width="16" height="22" viewBox="0 0 16 22">
      <defs><clipPath id="pin"><path d="M8 0a8 8 0 0 1 8 8c0 3-1.500 5-3.500 7.500C10.500 18 9 19 8 22c-1-3-2.500-4-4.500-6.500C1.500 13 0 11 0 8a8 8 0 0 1 8-8z" /></clipPath></defs>
      <g clipPath="url(#pin)"><rect width="16" height="22" fill="#34a853" /><path d="M0 0h16v3L4 17-2 13z" fill="#fbbc04" /><path d="M0 0h11L0 13z" fill="#ea4335" /><path d="M2 2l6-3 9 3-1 3-5 6-5-4z" fill="#4285f4" /><path d="M2 2.500L8-1l3 2-5 6z" fill="#1a73e8" /></g><circle cx="8" cy="8" r="2.800" fill="#fff" /></svg></Slot>
    <Slot $w={40} $h={38}><RailLine /></Slot>
    <Slot $w={40} $h={76}><svg width="17" height="17" stroke="#1f1f1f" strokeWidth="2"><path d="M8.500 0v17M0 8.500h17" /></svg></Slot>
    <Grow />
    <Slot $w={40} $h={70}><MdChevronRight size={25} color="#5f6368" /></Slot>
  </Rail>
);

const EventPopup = () => (
  <Popup>
    <PopupBar>
      <Slot $w={50}><svg width="21" height="21" viewBox="0 0 21 21" fill="none" stroke="#5f6368" strokeWidth="2.100"><path d="M1.500 16.200L14 3.700l3.300 3.300L4.800 19.500H1.500z" /><path d="M14 3.700l1.700-1.700a1.300 1.300 0 0 1 1.800 0L19 3.500a1.300 1.300 0 0 1 0 1.800L17.300 7z" fill="#5f6368" strokeWidth="1.200" /></svg></Slot>
      <Slot $w={50}><svg width="18" height="20" viewBox="0 0 18 20" fill="none" stroke="#5f6368" strokeWidth="2"><path d="M.5 2.500h17M5.500 1.200h7M3 2.500V17a1.800 1.800 0 0 0 1.800 1.800h8.400A1.800 1.800 0 0 0 15 17V2.500M7 5.500V15.500M11 5.500V15.500" /></svg></Slot>
      <Slot $w={50}><MdMailOutline size={25} /></Slot>
      <Slot $w={50}><MdMoreVert size={25} /></Slot>
      <CloseCircle><MdClose size={24} /></CloseCircle>
    </PopupBar>
    <PopupRow $h={40}><PopupIcon><Swatch /></PopupIcon><PopupTitle>Test Event</PopupTitle></PopupRow>
    <PopupRow $h={26}><PopupIcon /><Label $ls={0.33}>Tuesday, May 7 &nbsp;⋅&nbsp; 6:30 – 7:30pm</Label></PopupRow>
    <Slot $w={1} $h={21} />
    <PopupRow $h={40}><PopupIcon><svg width="20" height="13" stroke="#5f6368" strokeWidth="2"><path d="M0 1h20M0 6.500h20M0 12h14" /></svg></PopupIcon><Label $ls={0.25}>This is the first test event</Label></PopupRow>
    <PopupRow $h={40}><PopupIcon><svg width="20" height="22" viewBox="0 0 20 22" fill="#5f6368"><path fillRule="evenodd" d="M3 0h2.400v2.200h9.200V0H17v2.200h1a2 2 0 0 1 2 2V20a2 2 0 0 1-2 2H2a2 2 0 0 1-2-2V4.200a2 2 0 0 1 2-2h1zM2.200 8.200v11.600h15.600V8.200z" /><circle cx="12.800" cy="14.700" r="3.200" /></svg></PopupIcon><Label $ls={0.2}>service-account@ropulva-events.iam.gserviceaccount....</Label></PopupRow>
  </Popup>
);

const Bridge = () => (
  <svg width="58" height="32" viewBox="0 0 58 32">
    <path d="M22 27c8-6 20-11 33-11v9c0 4-3 6-8 6H14z" fill="#4fb8d0" />
    <path d="M31 4h5v12h-5zM41 4h5v13h-5zM36 8h5v7h-5z" fill="#d9d2df" />
    <path d="M31 5l2.500-5L36 5zM41 5l2.500-5L46 5zM36 9l2.500-4L41 9z" fill="#7467a0" />
    <path d="M8 29c4-7 14-15 30-16h12v7c-6-1-9 1-11 6-2-4-9-4-11 1-3-3-8-2-10 3z" fill="#c98562" />
    <path d="M8 25C16 16 26 11 38 11h12v3H39C27 14 17 19 9 29z" fill="#f0b088" />
    <path d="M48 17c0-7 2-10 4-10s4 3 4 9z" fill="#87a839" /><ellipse cx="6" cy="17" rx="5.500" ry="7.500" fill="#8bab3b" /><path d="M5 22h2v6H5z" fill="#7c5a2e" /><path d="M0 29c3-4 8-4 12 1l-5 1z" fill="#6e9b36" />
  </svg>
);

const taskIcons: { k: string; active?: boolean; running?: boolean; el: React.ReactNode }[] = [
  { k: 'copilot', el: <svg width="30" height="30" viewBox="0 0 30 30"><defs><linearGradient id="pa" x1="0" y1="0" x2="0" y2="1"><stop offset="0" stopColor="#1aa3f0" /><stop offset=".55" stopColor="#35b04a" /><stop offset="1" stopColor="#f2c40f" /></linearGradient><linearGradient id="pb" x1="0" y1="0" x2="0" y2="1"><stop offset="0" stopColor="#a25be8" /><stop offset="1" stopColor="#ef5a9b" /></linearGradient></defs><path d="M8 1h9c3 0 3.500 2 4 5h-4c-2 0-3 1-3.500 3L11 17c-1 3-2 3.500-4 3.500H4c-3 0-4-3-3-6L4 4c.7-2 2-3 4-3z" fill="url(#pa)" /><path d="M13 1h5c2.500 0 3 2 3.500 5H17c-1.500 0-2 .5-2.500 1.500z" fill="#1c55d8" /><path d="M19 7h6c3 0 4 3 3 6l-2 9H14z" fill="url(#pb)" /><rect x="7" y="20" width="23" height="9.500" rx="2" fill="#fdc500" /><text x="18.500" y="28" textAnchor="middle" fontFamily="Inter, sans-serif" fontWeight="700" fontSize="8.500" fill="#1c1c1c">PRE</text></svg> },
  { k: 'view', el: <svg width="30" height="28" viewBox="0 0 30 28"><rect x="7" y="0" width="23" height="20" rx="1.500" fill="#f0f0f0" /><rect x="0" y="8" width="22" height="20" rx="1.500" fill="#777" opacity=".85" /></svg> },
  { k: 'teams', el: <svg width="27" height="26" viewBox="0 0 27 26"><circle cx="15" cy="4.500" r="4.200" fill="#7b83eb" /><circle cx="23" cy="6" r="2.800" fill="#5059c9" /><path d="M17 10h9.500v7c0 3-2 5-5 5h-4z" fill="#5059c9" /><path d="M9 10h12v9c0 4-3 6.500-6 6.500S9 23 9 19z" fill="#7b83eb" /><rect y="6" width="14" height="14" rx="1" fill="#fff" /><path d="M3.500 9.500h7M7 9.500v8" stroke="#4b53bc" strokeWidth="2" /></svg> },
  { k: 'edge', active: true, el: <svg width="30" height="30" viewBox="0 0 30 30"><defs><linearGradient id="eg" x1="0" y1=".3" x2="1" y2=".5"><stop offset="0" stopColor="#2bb2f0" /><stop offset=".6" stopColor="#36c6c9" /><stop offset="1" stopColor="#6be045" /></linearGradient><linearGradient id="ed" x1="0" y1="0" x2=".3" y2="1"><stop offset="0" stopColor="#1a9be2" /><stop offset="1" stopColor="#0c59a4" /></linearGradient></defs><path d="M0 15C0 5 7 0 15 0c9 0 15 6.500 15 13 0 4.500-3.500 7.500-7.500 7.500-3.500 0-5.500-1.300-5.500-2.300 0-.8 1-1.200 1-3.200 0-2.500-2.500-5-6.500-5C6 10 1 12.500 0 15z" fill="url(#eg)" /><path d="M0 15c.5-4 5-6.500 10-6.500 4 0 7 2.500 7.500 5-5-3-8.500 1-8.500 5 0 6 6 10.500 12.500 8.500C19 29 17 30 15 30 6 30 0 23 0 15z" fill="url(#ed)" /><path d="M9.500 16c-3 8 5 15 13 11 2-1 4-3 5-5-6 2.500-14 1-14.500-4.500-.2-2 .5-3 1.500-4-2-.3-4 .5-5 2.500z" fill="#0f4f94" /></svg> },
  { k: 'yt', el: <YouTube w={30} /> },
  { k: 'files', el: <svg width="30" height="27" viewBox="0 0 30 27"><path d="M0 2a2 2 0 0 1 2-2h8l3 3.500h15a2 2 0 0 1 2 2V12H0z" fill="#e2a200" /><path d="M0 5.500h10L13 4h15a2 2 0 0 1 2 2v19a2 2 0 0 1-2 2H2a2 2 0 0 1-2-2z" fill="#ffcf48" /><path d="M5 27v-5a3 3 0 0 1 3-3h14a3 3 0 0 1 3 3v5z" fill="#0f75cf" /><path d="M9 22.500h12" stroke="#0b5394" strokeWidth="1.500" /></svg> },
  { k: 'mail', el: <svg width="30" height="28" viewBox="0 0 30 28"><path d="M0 9l15-9 15 9v10H0z" fill="#0e5ea8" /><path d="M2 9.500h26v8L15 24 2 17z" fill="#f3f3f3" /><path d="M0 9l30 19H2a2 2 0 0 1-2-2z" fill="#1a8ae0" /><path d="M30 9v17a2 2 0 0 1-2 2H2L15 18.500z" fill="#36b9f2" /></svg> },
  { k: 'code', el: <svg width="30" height="30" viewBox="0 0 30 30"><path d="M22 8L2.500 22.200 0 20.300v-1.500L21 0z" fill="#1176bc" /><path d="M22 22L2.500 7.800 0 9.700v1.500L21 30z" fill="#0a86d1" /><path d="M21 0l9 3.500v23L21 30c1-.5 1.300-1.500 1.300-3V3c0-1.500-.3-2.500-1.300-3z" fill="#25a5ee" /></svg> },
  { k: 'ij', running: true, el: <svg width="26" height="26" viewBox="0 0 26 26"><defs><linearGradient id="ij" x1="0" y1="0" x2="1" y2="1"><stop offset="0" stopColor="#fb3a78" /><stop offset=".25" stopColor="#9a3fc8" /><stop offset=".6" stopColor="#087cfa" /><stop offset=".85" stopColor="#3d6cf0" /><stop offset="1" stopColor="#ee7a3c" /></linearGradient></defs><rect width="26" height="26" fill="url(#ij)" /><rect x="4.500" y="4" width="17" height="18" fill="#000" /><text x="5.500" y="13.500" fontFamily='"Liberation Mono", monospace' fontWeight="700" fontSize="10" fill="#fff">IJ</text><path d="M6 19.500h7" stroke="#fff" strokeWidth="1.400" /></svg> },
  { k: 'pg', running: true, el: <svg width="30" height="30" viewBox="0 0 30 30"><path d="M3.500 2.500C6 0 10 1 12 2c3-1.500 6-1.500 8-.5 4-1.500 8 .5 8.500 4 .3 3-1.500 7.500-3.500 11l3.500 1c-1 2-4 2.500-7 2.500 0 3 .2 9-4.500 9-4 0-4.500-3-4.500-8-2 .5-3.500.5-5 0C4 20 .500 11 1 7c.2-2 1-3.500 2.500-4.500z" fill="#336791" /><SiPostgresql x="0" y="0" width="30" height="30" color="#f2f5f8" /></svg> },
  { k: 'term', running: true, el: <svg width="30" height="22" viewBox="0 0 30 22"><rect width="30" height="22" rx="1.500" fill="#4a4a4a" /><path d="M0 1.500A1.500 1.500 0 0 1 1.500 0H10v4H0z" fill="#d0d0d0" /><path d="M10 0h10v4H10z" fill="#a0a0a0" /><path d="M20 0h8.500A1.500 1.500 0 0 1 30 1.500V4H20z" fill="#777" /><path d="M4.500 7.500l5 5-5 5" stroke="#d8d8d8" strokeWidth="2.600" fill="none" /><path d="M12 17.500h9" stroke="#fff" strokeWidth="2.400" /></svg> },
  { k: 'postman', running: true, el: <svg width="30" height="30" viewBox="0 0 30 30"><circle cx="15" cy="15" r="15" fill="#ff6c37" /><circle cx="21.500" cy="8" r="3" fill="#fff" /><path d="M20 9.500l2 2.500-10 10-4 2 1-3z" fill="#fff" /><path d="M11 19l8-8" stroke="#ff6c37" strokeWidth=".8" /></svg> },
];

const Bar = () => (
  <TaskBar>
    <Weather>
      <svg width="38" height="46" viewBox="0 -8 38 46"><defs><linearGradient id="mn" x1="0" y1="0" x2="0" y2="1"><stop offset="0" stopColor="#fdc04a" /><stop offset="1" stopColor="#f07a12" /></linearGradient></defs><path d="M24 9a9.500 9.500 0 0 1-19 9.500 13 13 0 0 0 26-3c0-3-1-5-3-7-1 0-3-.3-4 .5z" fill="url(#mn)" /><path d="M7 12.500a4.600 4.600 0 0 1 0-9 7 7 0 0 1 13-1v10z" fill="#bcd3f7" /><circle cx="27" cy="2.500" r="10" fill="#c42b1c" /><text x="27" y="8" textAnchor="middle" fontFamily={SEGOE} fontSize="15" fill="#fff">1</text></svg>
      <WeatherText><Label $ls={-0.5}>23°C</Label><Muted dir="rtl">صافٍ غالبًا</Muted></WeatherText>
    </Weather>
    <Slot $w={55}><svg width="29" height="29" viewBox="0 0 29 29"><defs><linearGradient id="wn" x1="0" y1="0" x2="1" y2="1"><stop offset="0" stopColor="#7fdcff" /><stop offset="1" stopColor="#0f8ff5" /></linearGradient></defs><path d="M1 0h13v14H0V1zM15 0h13l1 1v13H15zM0 15h14v14H1l-1-1zM15 15h14v13l-1 1H15z" fill="url(#wn)" /></svg></Slot>
    <SearchPill><SearchLeft><svg width="19" height="20" viewBox="0 0 19 20" fill="none" stroke="#1f1f1f" strokeWidth="2"><circle cx="8.500" cy="8" r="6.800" /><path d="M13.300 13l4.700 6" strokeWidth="2.400" /></svg><Label $ls={-0.5}>Search</Label></SearchLeft><Bridge /></SearchPill>
    {taskIcons.map(t => <TaskButton key={t.k} $active={t.active} $running={t.running}>{t.el}</TaskButton>)}
    <Tray>
      <svg width="15" height="9" viewBox="0 0 15 9" fill="none" stroke="#fff" strokeWidth="1.700"><path d="M.8 8L7.500 1.300 14.200 8" /></svg>
      <Slot $w={22} />
      <svg width="21" height="18" viewBox="0 0 21 18"><path d="M5 6a5.500 5.500 0 0 1 11-1c3 1 4 3 4 5v3H5z" fill="#8a8a8a" /><path d="M4 13.500A3.800 3.800 0 0 1 4 6a5 5 0 0 1 9 0v7.500z" fill="#d6d6d6" /><circle cx="14.500" cy="12" r="5.700" fill="#fde300" /><path d="M14.500 8.300v4.500M14.500 14v1.600" stroke="#222" strokeWidth="1.500" /></svg>
      <Slot $w={22} />
      <Label $w={30} $ls={-0.5}>ENG</Label>
      <Slot $w={22} />
      <svg width="20" height="15" viewBox="0 0 20 15" fill="none" stroke="#fff" strokeWidth="1.500"><path d="M.6 5.300a13.300 13.300 0 0 1 18.800 0M3.400 8.200a9.300 9.300 0 0 1 13.200 0M6.200 11a5.400 5.400 0 0 1 7.600 0" /><circle cx="10" cy="13" r="1.900" fill="#fff" stroke="none" /></svg>
      <Slot $w={10} />
      <svg width="20" height="16" viewBox="0 0 20 16" fill="none" stroke="#fff" strokeWidth="1.400" strokeLinecap="round"><path d="M1 5.500h3L8.500 1.500v13L4 10.500H1zM11 5.500c1 1.500 1 3.500 0 5M13.500 3.500c2 2.500 2 6.500 0 9" /><path d="M16 1.500c3 3.500 3 9.500 0 13" stroke="#666" /></svg>
      <Slot $w={10} />
      <svg width="21" height="17" viewBox="0 0 21 17"><rect x="1" y="4.700" width="16.500" height="11" rx="2.500" fill="none" stroke="#fff" strokeWidth="1.500" /><rect x="3.300" y="7" width="12" height="6.500" rx="1" fill="#fff" /><path d="M18.500 8h1.500v4.500h-1.500z" fill="#fff" stroke="#fff" /><path d="M4.500 0L0 6h3L2 11l5.500-6.500H5z" fill="#fff" stroke="#202020" strokeWidth=".8" /></svg>
      <Slot $w={11} />
      <Clock>9:00 PM<br />5/6/2024</Clock>
      <Slot $w={10} />
      <svg width="19" height="18" viewBox="0 0 19 18" fill="none" stroke="#fff" strokeWidth="1.500"><path d="M9.500 1.500C5.500 1 3.500 4 3.500 7v3.500L1.300 14h14.500l-1.500-3M6 14.300c.5 3 4.500 3 5 0" /><path d="M7.500 6.500h3.500l-3.500 4.500h3.500M14 1.200h3.300L14 5.300h3.500" /></svg>
      <Slot $w={5} />
    </Tray>
  </TaskBar>
);

export default function App() {
  return (
    <Screen>
      <GlobalStyle />
      <Chrome />
      <Page>
        <HeaderBar />
        <Body><SideBar /><DayView /><SideRail /></Body>
        <EventPopup />
      </Page>
      <Bar />
    </Screen>
  );
}
